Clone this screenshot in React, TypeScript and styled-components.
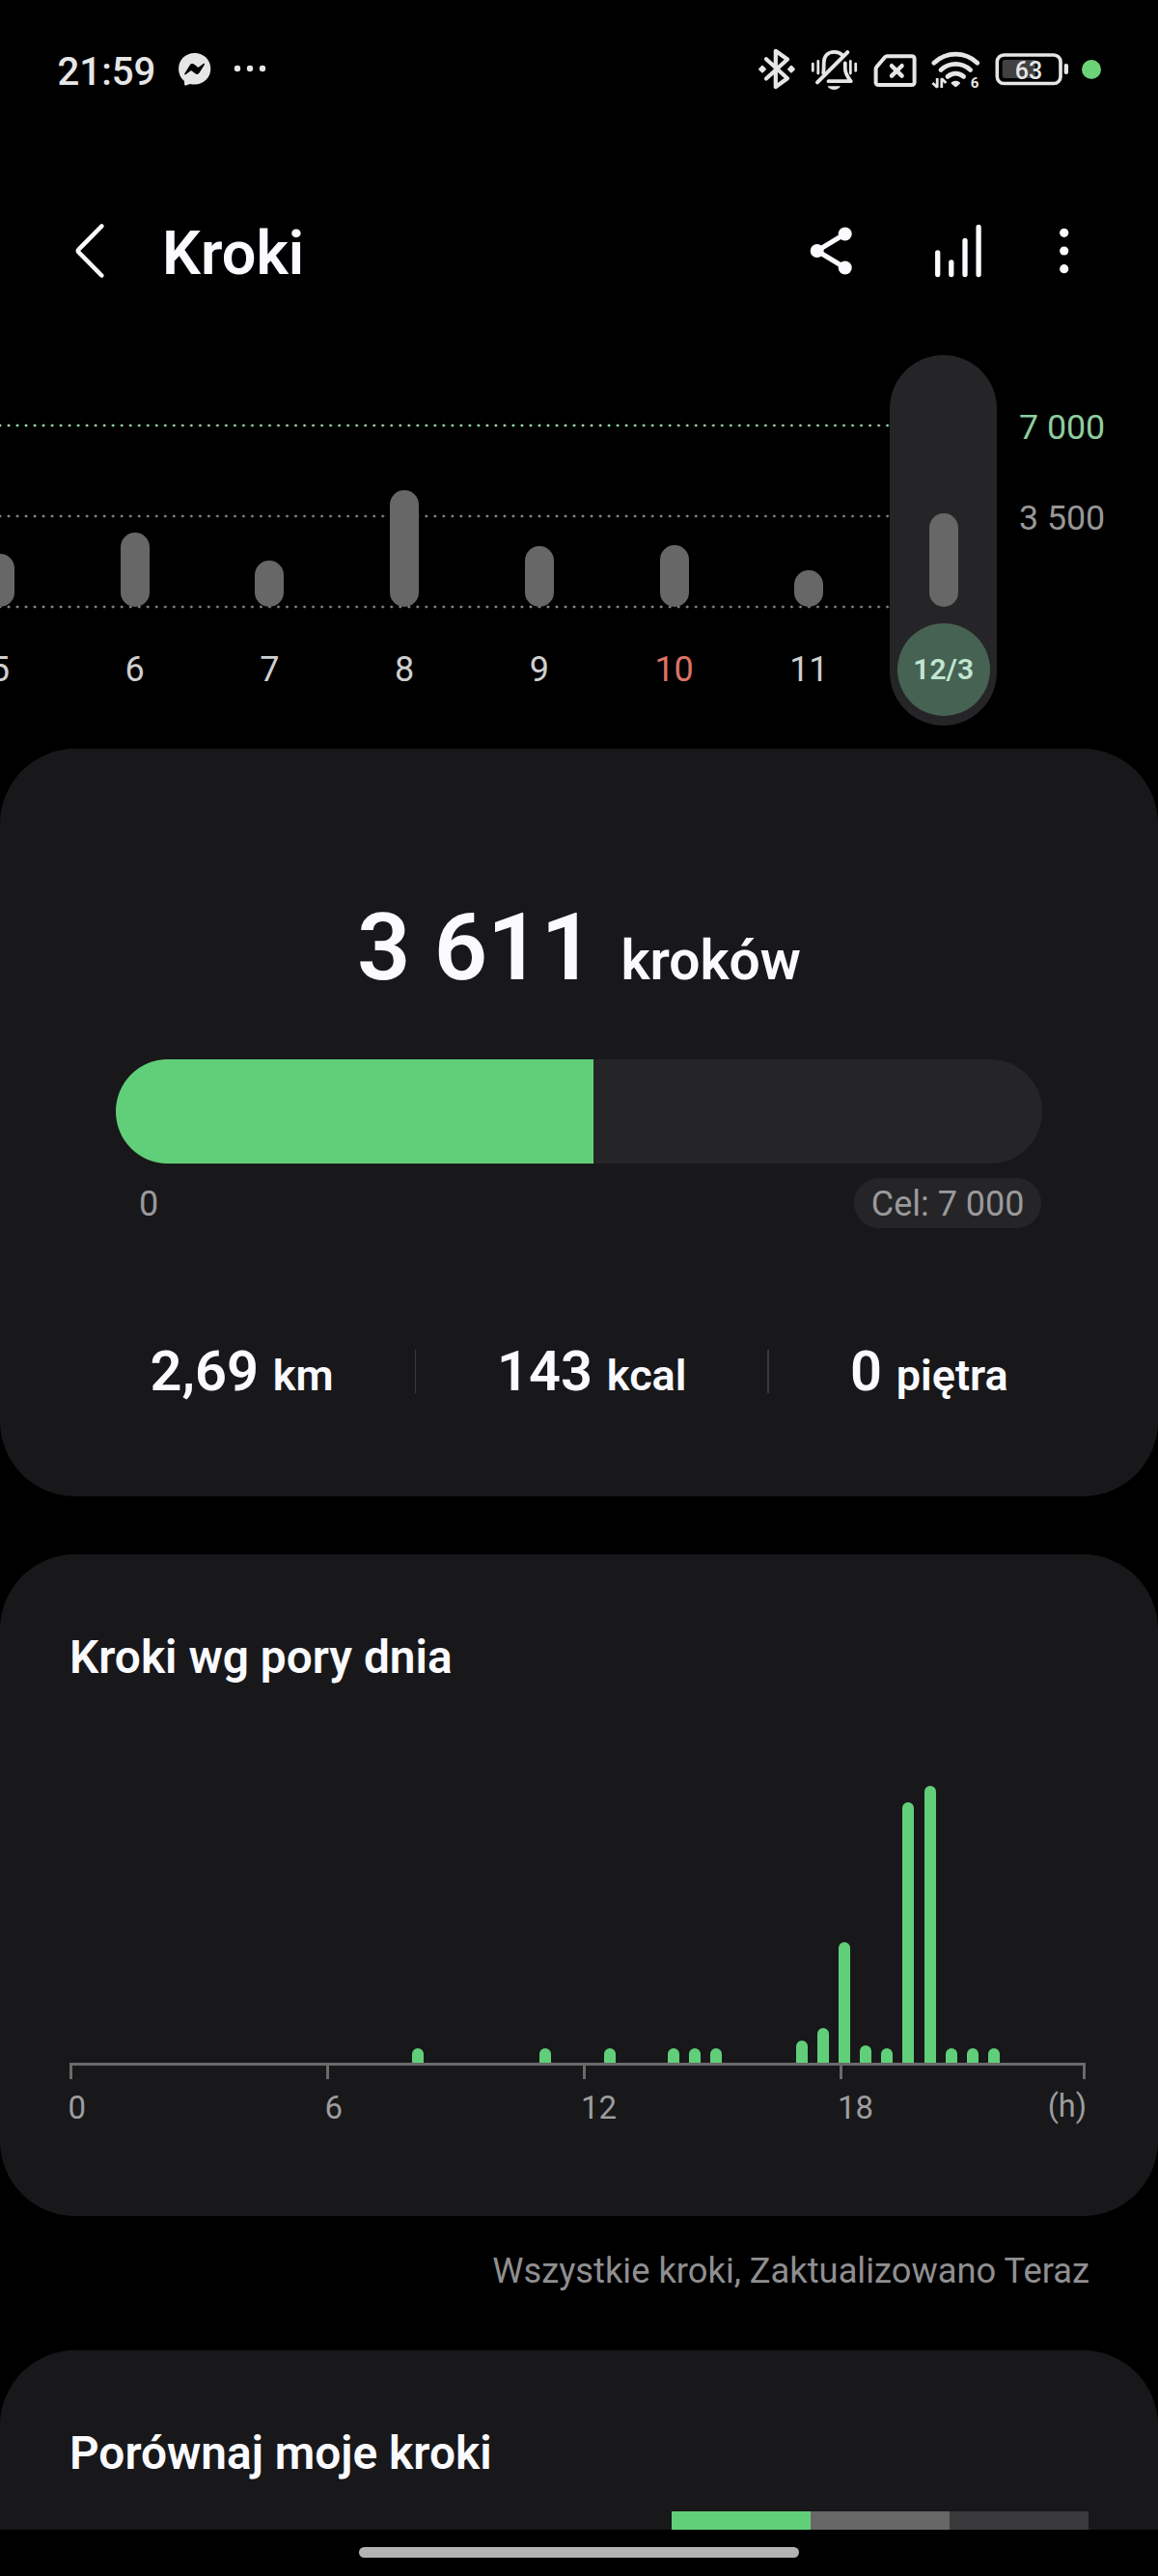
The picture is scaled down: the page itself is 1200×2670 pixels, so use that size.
import React from "react";
import styled, { createGlobalStyle } from "styled-components";

const GREEN = "#61cf79";
const CARD = "#18181a";
const RAISED = "#252527";
const BAR = "#676767";
const TEXT = "#fafaff";
const MUTED = "#9a9a9c";
const STATUS = "#e6e6e6";

const GlobalStyle = createGlobalStyle`
  * { box-sizing: border-box; }
  html, body { margin: 0; padding: 0; background: #000; }
  body { font-family: Roboto, "Noto Sans", sans-serif; color: ${TEXT}; }
  svg { display: block; flex: none; }
`;

const Screen = styled.div`
  width: 1200px;
  height: 2670px;
  overflow: hidden;
  background: #000;
  display: flex;
  flex-direction: column;
`;

/* ---------- status bar ---------- */

const StatusBar = styled.header`
  flex: none;
  height: 144px;
  padding: 0 56px 0 59.5px;
  display: flex;
  align-items: center;
  justify-content: space-between;
`;

const StatusGroup = styled.div<{ $gap: number }>`
  display: flex;
  align-items: center;
  gap: ${(p) => p.$gap}px;
`;

const Clock = styled.span`
  font-size: 40.2px;
  font-weight: 500;
  line-height: 40px;
  padding-top: 5px;
  color: ${STATUS};
`;

const MessengerIcon = () => (
  <svg width="36" height="60" viewBox="184 42 36 60">
    <path d="M201.7 55.1c9.3 0 16.6 6.9 16.6 16.2s-7.3 16.2-16.6 16.2c-1.7 0-3.3-.2-4.8-.6l-4 1.5c-1 .4-1.7-.1-1.8-1.1l-.1-3.2c-3.7-3-5.9-7.5-5.9-12.8 0-9.3 7.3-16.2 16.6-16.2z" fill={STATUS} />
    <path d="M191.3 76.3l5.6-9c.9-1.5 2.9-1.8 4.2-.8l3.7 2.9c.4.3.9.3 1.2 0l4.8-3.4c.7-.5 1.6.3 1.1 1l-5.3 8.5c-.9 1.5-2.9 1.8-4.2.8l-3.7-2.8c-.4-.3-.9-.3-1.2 0l-5.1 3.8c-.7.5-1.6-.3-1.1-1z" fill="#000" />
  </svg>
);

const MoreDotsIcon = () => (
  <svg width="34" height="60" viewBox="240 42 34 60" fill={STATUS}>
    <circle cx="244" cy="71" r="3.2" />
    <circle cx="257" cy="71" r="3.2" />
    <circle cx="270" cy="71" r="3.2" />
  </svg>
);

const BluetoothIcon = () => (
  <svg width="44" height="60" viewBox="784 42 44 60" fill="none" stroke={STATUS} strokeWidth="4.2" strokeLinecap="round" strokeLinejoin="round">
    <path d="M794 61.2L816 81.2L803.8 90V52.8L816 61.5L794 81.5" />
    <path d="M790 68.8l2.9 2.9-2.9 2.9-2.9-2.9zM820 68.8l2.9 2.9-2.9 2.9-2.9-2.9z" fill={STATUS} strokeWidth="2" />
  </svg>
);

const MutedBellIcon = () => (
  <svg width="52" height="60" viewBox="838 42 52 60" fill="none" stroke={STATUS} strokeWidth="3.8" strokeLinecap="round" strokeLinejoin="round">
    <path d="M853.2 75.5C853.8 72 853.7 68 853.7 65.5C853.7 58 858 53.8 864.5 53.8C868 53.8 870.8 54.8 872.8 57" />
    <path d="M875.8 65.5V71C875.8 77 879 80.5 881.8 84.2H858.5" />
    <path d="M847 85.3L878.3 54.2" strokeWidth="4" />
    <path d="M842.3 66.2V73.3M847.8 63.5V76M881.3 63.5V76M886.7 66.2V73.3" strokeWidth="2.8" />
    <path d="M857.5 89.3H871C869.5 92 867.2 93 864.3 93S859 92 857.5 89.3Z" fill={STATUS} stroke="none" />
  </svg>
);

const NoSimIcon = () => (
  <svg width="54" height="60" viewBox="900 42 54 60" fill="none" stroke={STATUS} strokeWidth="4" strokeLinecap="round" strokeLinejoin="round">
    <path d="M919.2 58.2H945a2.6 2.6 0 0 1 2.6 2.6V85.5a2.6 2.6 0 0 1-2.6 2.6H910.2a2.6 2.6 0 0 1-2.6-2.6V71.5c0-.9.3-1.6.9-2.3L917 59.2c.6-.7 1.3-1 2.2-1z" />
    <path d="M924 68.2L934.6 78.6M934.6 68.2L924 78.6" strokeWidth="4.4" />
  </svg>
);

const WifiNumber = styled.text`
  font-family: Roboto, sans-serif;
  font-size: 15px;
  font-weight: 700;
  fill: ${STATUS};
`;

const WifiIcon = () => (
  <svg width="54" height="60" viewBox="964 42 54 60" fill="none" stroke={STATUS} strokeWidth="4.8" strokeLinecap="round">
    <path d="M967.8 65.2C981 53.2 999.6 53.2 1012.8 65.2" />
    <path d="M975 72.5C984 64.4 996.6 64.4 1005.6 72.5" />
    <path d="M982 79.4C987 75.2 993.6 75.2 998.6 79.4" />
    <path d="M986.4 84.9C989 83.4 991.6 83.4 994.2 84.9C995.2 85.5 995.2 86.3 994.5 87L991.4 89.8C990.7 90.4 989.9 90.4 989.2 89.8L986.1 87C985.4 86.3 985.4 85.5 986.4 84.9Z" fill={STATUS} stroke="none" />
    <path d="M971.2 81V90.5L966.4 86M975.8 91V81.5L980.4 86" strokeWidth="2.8" strokeLinecap="butt" strokeLinejoin="bevel" />
    <WifiNumber x="1010" y="91" textAnchor="middle" stroke="none">6</WifiNumber>
  </svg>
);

const BatteryLevel = styled.text`
  font-family: Roboto, sans-serif;
  font-size: 25px;
  font-weight: 500;
  fill: ${STATUS};
`;

const BatteryIcon = () => (
  <svg width="82" height="60" viewBox="1028 42 82 60">
    <rect x="1033.3" y="57" width="65.7" height="29.5" rx="7" fill="none" stroke={STATUS} strokeWidth="3.6" />
    <path d="M1041.7 62H1073V81H1041.7a3 3 0 0 1-3-3V65a3 3 0 0 1 3-3z" fill="#414141" />
    <rect x="1102.7" y="66" width="4.3" height="11" rx="2" fill={STATUS} />
    <BatteryLevel x="1066" y="81.8" textAnchor="middle">63</BatteryLevel>
  </svg>
);

const PrivacyDot = styled.span`
  width: 20px;
  height: 20px;
  margin: 0 3px 0 1px;
  border-radius: 50%;
  background: #6bd277;
`;

/* ---------- title bar ---------- */

const TitleBar = styled.div`
  flex: none;
  height: 224px;
  padding: 8px 86px 0 72px;
  display: flex;
  align-items: center;
`;

const Title = styled.h1`
  margin: 0 auto 0 48px;
  padding-top: 5px;
  font-size: 63px;
  line-height: 63px;
  font-weight: 600;
`;

const Actions = styled.div`
  display: flex;
  align-items: center;
  gap: 70px;
`;

const BackIcon = () => (
  <svg width="48" height="64" viewBox="72 228 48 64" fill="none" stroke={TEXT} strokeWidth="4.6" strokeLinecap="round" strokeLinejoin="round">
    <path d="M105.3 234.5L81.6 258.5Q80.2 260 81.6 261.5L105.3 285.5" />
  </svg>
);

const ShareIcon = () => (
  <svg width="56" height="64" viewBox="832 228 56 64" fill={TEXT}>
    <path d="M875.7 242.5L846.7 260L875.7 277.5" fill="none" stroke={TEXT} strokeWidth="5" />
    <circle cx="875.7" cy="242.5" r="7" />
    <circle cx="846.7" cy="260" r="7" />
    <circle cx="875.7" cy="277.5" r="7" />
  </svg>
);

const TrendsIcon = () => (
  <svg width="64" height="64" viewBox="958 228 64 64" stroke={TEXT} strokeWidth="5.3" strokeLinecap="round">
    <path d="M971.7 261.8V284.5M985.8 271.8V284.5M1000 249.5V284.5M1014.1 235.5V284.5" />
  </svg>
);

const MenuIcon = () => (
  <svg width="22" height="64" viewBox="1092 228 22 64" fill={TEXT}>
    <circle cx="1102.7" cy="241.3" r="4.6" />
    <circle cx="1102.7" cy="260" r="4.6" />
    <circle cx="1102.7" cy="278.7" r="4.6" />
  </svg>
);

/* ---------- weekly chart ---------- */

const Week = styled.section`
  flex: none;
  height: 408px;
  display: flex;
  align-items: flex-start;
`;

const dots = (color: string) =>
  `radial-gradient(circle at center, ${color} 0.9px, transparent 1.8px)`;

const Plot = styled.div`
  flex: none;
  width: 922px;
  height: 384px;
  overflow: hidden;
  display: flex;
  background-image: ${dots("#9fdcac")}, ${dots("#8a8a8a")}, ${dots("#8a8a8a")};
  background-size: 9.02px 4px;
  background-repeat: repeat-x;
  background-position: -4.5px 71px, -4.5px 165px, -4.5px 259px;
`;

const Day = styled.div`
  flex: none;
  width: 139.75px;
  display: flex;
  flex-direction: column;
  align-items: center;
  &:first-child { margin-left: -70px; }
`;

const SelectedDay = styled(Day)`
  width: 111.4px;
  height: 384px;
  border-radius: 56px;
  background: ${RAISED};
`;

const BarSlot = styled.div`
  height: 261px;
  display: flex;
  align-items: flex-end;
`;

const DayBar = styled.div`
  width: 30px;
  border-radius: 15px;
  background: ${BAR};
`;

const DayLabel = styled.div<{ $holiday?: boolean }>`
  margin-top: 16.5px;
  font-size: 36px;
  line-height: 96px;
  color: ${(p) => (p.$holiday ? "#dc7466" : "#cfcfcf")};
`;

const SelectedLabel = styled.div`
  width: 96px;
  height: 96px;
  margin-top: 16.5px;
  border-radius: 50%;
  background: #466253;
  color: #c0e6d2;
  font-size: 30px;
  font-weight: 600;
  line-height: 96px;
  text-align: center;
`;

const Scale = styled.div`
  padding: 28px 0 0 22.5px;
  font-size: 35.8px;
  line-height: 94px;
`;

const ScaleMark = styled.div<{ $goal?: boolean }>`
  color: ${(p) => (p.$goal ? "#8fcd9f" : "#979797")};
`;

const days = [
  { label: "5", height: 54.7 },
  { label: "6", height: 77.3 },
  { label: "7", height: 48 },
  { label: "8", height: 120.7 },
  { label: "9", height: 63 },
  { label: "10", height: 64, holiday: true },
  { label: "11", height: 38 },
];

/* ---------- cards ---------- */

const Card = styled.section<{ $height: number; $cut?: boolean }>`
  flex: none;
  height: ${(p) => p.$height}px;
  border-radius: ${(p) => (p.$cut ? "78px 78px 0 0" : "78px")};
  background: ${CARD};
  overflow: hidden;
`;

const SummaryCard = styled(Card)`
  padding: 157.5px 120px 0;
  margin-bottom: 60px;
`;

const Total = styled.div`
  display: flex;
  justify-content: center;
  align-items: baseline;
  gap: 27.5px;
  height: 97px;
  font-size: 97px;
  line-height: 97px;
  font-weight: 600;
  white-space: nowrap;
`;

const TotalUnit = styled.span`
  font-size: 57px;
  line-height: 57px;
`;

const Track = styled.div`
  height: 108px;
  margin-top: 67.5px;
  border-radius: 54px;
  background: ${RAISED};
  overflow: hidden;
`;

const Fill = styled.div`
  height: 100%;
  background: ${GREEN};
`;

const Range = styled.div`
  display: flex;
  justify-content: space-between;
  margin-top: 15px;
  padding: 0 1px 0 24px;
  font-size: 36px;
  line-height: 52px;
  color: ${MUTED};
`;

const RangeStart = styled.span`
  padding-top: 1px;
`;

const Goal = styled.span`
  height: 52px;
  padding: 1px 17.5px 0;
  border-radius: 26px;
  background: ${RAISED};
`;

const Stats = styled.div`
  display: flex;
  justify-content: center;
  gap: 84px;
  margin-top: 118px;
`;

const Stat = styled.div`
  display: flex;
  align-items: baseline;
  gap: 14.7px;
  height: 58px;
  font-size: 57.8px;
  line-height: 58px;
  font-weight: 600;
  white-space: nowrap;
`;

const StatUnit = styled.span`
  font-size: 45px;
  line-height: 45px;
`;

const Divider = styled.div`
  width: 1.5px;
  height: 45px;
  margin-top: 7px;
  background: #38383a;
`;

const CardTitle = styled.h2`
  margin: 0;
  font-size: 47.8px;
  line-height: 48px;
  font-weight: 600;
`;

/* ---------- hourly chart ---------- */

const HourlyCard = styled(Card)`
  padding: 83px 72px 0;
`;

const Hours = styled.div`
  width: 1053px;
  height: 296px;
  margin-top: 103px;
  padding-left: 0.5px;
  display: flex;
  align-items: flex-end;
  justify-content: space-between;
  border-bottom: 3px solid #6a6a6b;
`;

const HourBar = styled.div`
  width: 12px;
  border-radius: 6px 6px 0 0;
  background: ${GREEN};
`;

const HourAxis = styled.div`
  width: 1053px;
  display: grid;
  grid-template-columns: 266px 265.5px 266px 1fr;
`;

const Tick = styled.div`
  height: 14px;
  border-left: 3px solid #6a6a6b;
  &:last-child { border-right: 3px solid #6a6a6b; }
`;

const HourLabels = styled(HourAxis)`
  font-size: 33px;
  line-height: 60px;
  color: #9d9d9f;
`;

const HourLabel = styled.div`
  margin-left: -1.5px;
  display: flex;
  justify-content: space-between;
`;

const HourUnit = styled.span`
  margin: -2px -1px 0 0;
  font-size: 32.5px;
`;

const SLOTS = 48;
const hourly: Record<number, number> = {
  16: 15.3, 22: 15.3, 25: 15.3, 28: 15.3, 29: 15.3, 30: 15.3,
  34: 23.3, 35: 36.3, 36: 125.3, 37: 18, 38: 15.3, 39: 270, 40: 286.7,
  41: 15.3, 42: 15.3, 43: 15.3,
};

const UpdateNote = styled.p`
  flex: none;
  height: 139.5px;
  margin: 0;
  padding: 32px 71px 0 0;
  font-size: 36.3px;
  line-height: 50px;
  text-align: right;
  color: #8f8f91;
`;

/* ---------- comparison ---------- */

const CompareCard = styled(Card)`
  padding: 83px 72px 0;
`;

const Segments = styled.div`
  display: flex;
  justify-content: flex-end;
  margin-top: 36px;
`;

const Segment = styled.div<{ $color: string }>`
  width: 144px;
  height: 30px;
  background: ${(p) => p.$color};
`;

const NavBar = styled.footer`
  flex: none;
  height: 48px;
  padding-top: 18.7px;
  background: #000;
`;

const HomeHandle = styled.div`
  width: 456px;
  height: 11.3px;
  margin: 0 auto;
  border-radius: 5.5px;
  background: #b3b3b3;
`;

const steps = 3611;
const goal = 7000;

export default function App() {
  return (
    <>
      <GlobalStyle />
      <Screen>
        <StatusBar>
          <StatusGroup $gap={22.5}>
            <Clock>21:59</Clock>
            <MessengerIcon />
            <MoreDotsIcon />
          </StatusGroup>
          <StatusGroup $gap={10}>
            <BluetoothIcon />
            <MutedBellIcon />
            <NoSimIcon />
            <WifiIcon />
            <BatteryIcon />
            <PrivacyDot />
          </StatusGroup>
        </StatusBar>

        <TitleBar>
          <BackIcon />
          <Title>Kroki</Title>
          <Actions>
            <ShareIcon />
            <TrendsIcon />
            <MenuIcon />
          </Actions>
        </TitleBar>

        <Week>
          <Plot>
            {days.map((d) => (
              <Day key={d.label}>
                <BarSlot>
                  <DayBar style={{ height: d.height }} />
                </BarSlot>
                <DayLabel $holiday={d.holiday}>{d.label}</DayLabel>
              </Day>
            ))}
          </Plot>
          <SelectedDay>
            <BarSlot>
              <DayBar style={{ height: 97.3 }} />
            </BarSlot>
            <SelectedLabel>12/3</SelectedLabel>
          </SelectedDay>
          <Scale>
            <ScaleMark $goal>7 000</ScaleMark>
            <ScaleMark>3 500</ScaleMark>
          </Scale>
        </Week>

        <SummaryCard $height={775}>
          <Total>
            3 611
            <TotalUnit>kroków</TotalUnit>
          </Total>
          <Track>
            <Fill style={{ width: `${(steps / goal) * 100}%` }} />
          </Track>
          <Range>
            <RangeStart>0</RangeStart>
            <Goal>Cel: 7 000</Goal>
          </Range>
          <Stats>
            <Stat>2,69<StatUnit>km</StatUnit></Stat>
            <Divider />
            <Stat>143<StatUnit>kcal</StatUnit></Stat>
            <Divider />
            <Stat>0<StatUnit>piętra</StatUnit></Stat>
          </Stats>
        </SummaryCard>

        <HourlyCard $height={685.5}>
          <CardTitle>Kroki wg pory dnia</CardTitle>
          <Hours>
            {Array.from({ length: SLOTS }, (_, i) => (
              <HourBar key={i} style={{ height: hourly[i] ?? 0 }} />
            ))}
          </Hours>
          <HourAxis>
            <Tick />
            <Tick />
            <Tick />
            <Tick />
          </HourAxis>
          <HourLabels>
            <HourLabel>0</HourLabel>
            <HourLabel>6</HourLabel>
            <HourLabel>12</HourLabel>
            <HourLabel>
              18<HourUnit>(h)</HourUnit>
            </HourLabel>
          </HourLabels>
        </HourlyCard>

        <UpdateNote>Wszystkie kroki, Zaktualizowano Teraz</UpdateNote>

        <CompareCard $height={185.5} $cut>
          <CardTitle>Porównaj moje kroki</CardTitle>
          <Segments>
            <Segment $color={GREEN} />
            <Segment $color={BAR} />
            <Segment $color="#3a3a3c" />
          </Segments>
        </CompareCard>

        <NavBar>
          <HomeHandle />
        </NavBar>
      </Screen>
    </>
  );
}
